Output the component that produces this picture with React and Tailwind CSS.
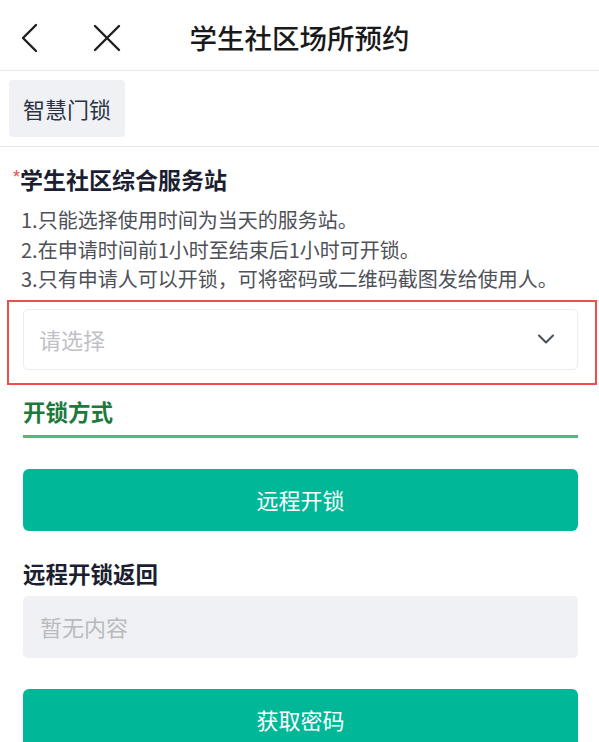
import { ChevronDown } from "lucide-react";

const font = { fontFamily: '"Noto Sans CJK SC", "Noto Sans", sans-serif' };

function BackIcon() {
  return (
    <svg width="22" height="30" viewBox="0 0 22 30" fill="none" stroke="#1f1f1f" strokeWidth="2.4" strokeLinecap="round" strokeLinejoin="round">
      <path d="M17 2 L4 15 L17 28" />
    </svg>
  );
}

function CloseIcon() {
  return (
    <svg width="30" height="30" viewBox="0 0 30 30" fill="none" stroke="#1f1f1f" strokeWidth="2.4" strokeLinecap="round">
      <path d="M3 3 L27 27 M27 3 L3 27" />
    </svg>
  );
}

const rules = [
  "1.只能选择使用时间为当天的服务站。",
  "2.在申请时间前1小时至结束后1小时可开锁。",
  "3.只有申请人可以开锁，可将密码或二维码截图发给使用人。",
];

export default function App() {
  return (
    <div className="min-h-[742px] w-[599px] overflow-hidden bg-white" style={font}>
      <header className="relative flex h-[71px] items-center border-b border-[#e9e9ec]">
        <div className="flex items-center pl-[19px] pt-[6px]">
          <button type="button" className="flex h-[30px] w-[24px] items-center"><BackIcon /></button>
          <button type="button" className="ml-[49px] flex h-[30px] w-[30px] items-center"><CloseIcon /></button>
        </div>
        <h1 className="absolute left-0 right-0 top-[18px] text-center text-[27.5px] leading-[38px] font-medium text-[#1a1a1a]">学生社区场所预约</h1>
      </header>

      <div className="border-b border-[#e6e7ea] px-[9px] py-[9px]">
        <div className="flex h-[57px] w-[116px] items-center justify-center rounded-[4px] bg-[#eff1f5] text-[22px] text-[#2b3244]">智慧门锁</div>
      </div>

      <div className="pl-[23px] pr-[21px]">
        <div className="-ml-[10px] mt-[16px] flex items-start text-[23px] leading-[32px] font-bold text-[#1b1f31]">
          <span className="mt-[4px] text-[18px] leading-[20px] font-normal text-[#f04848]" style={{ fontFamily: '"Liberation Sans", sans-serif' }}>*</span>
          <span>学生社区综合服务站</span>
        </div>

        <ul className="-ml-[2px] mt-[10px] text-[20px] leading-[29.5px] text-[#4f5159]">
          {rules.map((r) => <li key={r}>{r}</li>)}
        </ul>

        <div className="-ml-[16px] -mr-[19px] mt-[6px] border-2 border-[#f34a4a] pb-[13px] pl-[14px] pr-[17px] pt-[7px]">
          <div className="flex h-[61px] items-center justify-between rounded-[5px] border border-[#ebecef] bg-white pl-[15px] pr-[17px]">
            <span className="text-[22px] text-[#c0c1c6]">请选择</span>
            <ChevronDown size={28} strokeWidth={1.8} color="#4a4f5c" />
          </div>
        </div>

        <div className="mt-[11px] text-[22.5px] leading-[30px] font-bold text-[#1d7a3c]">开锁方式</div>
        <div className="mt-[9px] h-[3px] bg-[#4cbf6c]" />

        <button type="button" className="mt-[31px] flex h-[62px] w-full items-center justify-center rounded-[6px] bg-[#00b898] text-[22px] text-white">远程开锁</button>

        <div className="mt-[27px] text-[22.5px] leading-[30px] font-bold text-[#1b1f31]">远程开锁返回</div>
        <div className="mt-[8px] flex h-[62px] items-center rounded-[5px] bg-[#f0f1f4] pl-[17px] text-[22px] text-[#b9babe]">暂无内容</div>

        <button type="button" className="mt-[31px] flex h-[62px] w-full items-center justify-center rounded-[6px] bg-[#00b898] text-[22px] text-white">获取密码</button>
      </div>
    </div>
  );
}
